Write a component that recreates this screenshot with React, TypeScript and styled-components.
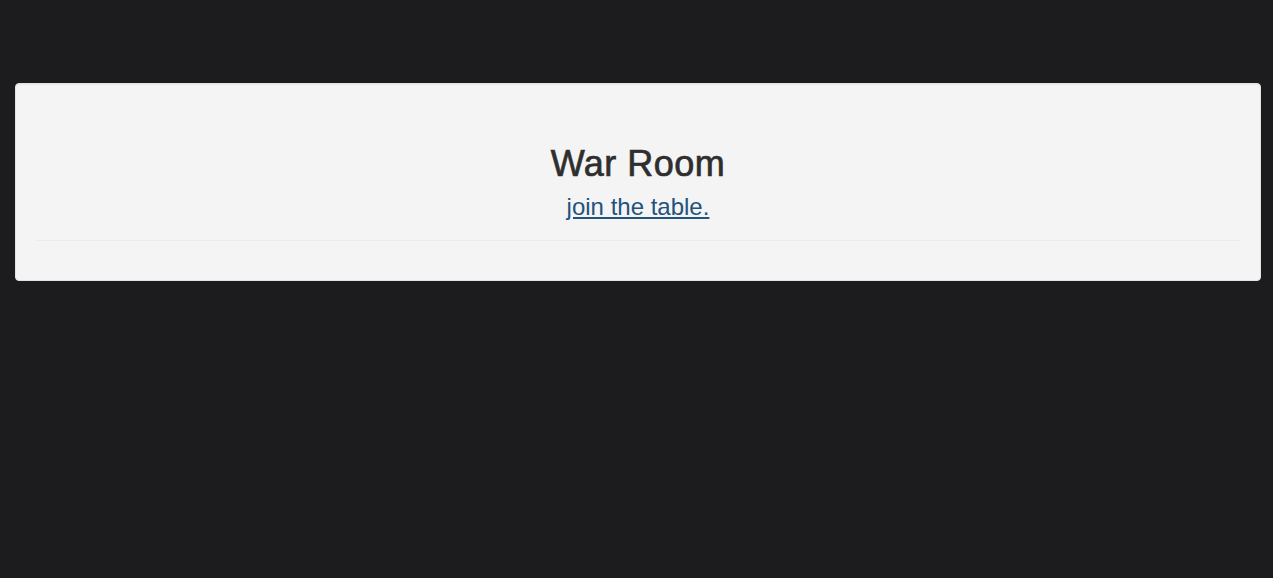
import React from "react";
import styled, { createGlobalStyle } from "styled-components";

const GlobalStyle = createGlobalStyle`
  html, body {
    margin: 0;
    padding: 0;
    background: #1c1c1e;
  }
  body {
    font-family: "Liberation Sans", Arial, Helvetica, sans-serif;
    color: #333333;
  }
`;

const Page = styled.div`
  padding: 83px 12px 0 15px;
`;

const Well = styled.section`
  background: #f4f4f4;
  border: 1px solid #e3e3e3;
  border-radius: 4px;
  box-shadow: inset 0 1px 1px rgba(0, 0, 0, 0.05);
  padding: 19px;
`;

const Header = styled.header`
  padding-top: 41px;
  text-align: center;
`;

const Title = styled.h1`
  margin: 0 0 10px;
  font-size: 36px;
  line-height: 40px;
  font-weight: 400;
  letter-spacing: 0.5px;
  -webkit-text-stroke: 0.7px currentColor;
  color: #2e2e2e;
`;

const Subtitle = styled.h3`
  margin: 0;
  font-size: 24px;
  line-height: 26px;
  font-weight: 400;
`;

const JoinLink = styled.a`
  color: #23527c;
  text-decoration: underline;
`;

const Divider = styled.hr`
  margin: 20px 0;
  border: 0;
  border-top: 1px solid #ececec;
`;

export default function App() {
  return (
    <>
      <GlobalStyle />
      <Page>
        <Well>
          <Header>
            <Title>War Room</Title>
            <Subtitle>
              <JoinLink href="#">join the table.</JoinLink>
            </Subtitle>
          </Header>
          <Divider />
        </Well>
      </Page>
    </>
  );
}
